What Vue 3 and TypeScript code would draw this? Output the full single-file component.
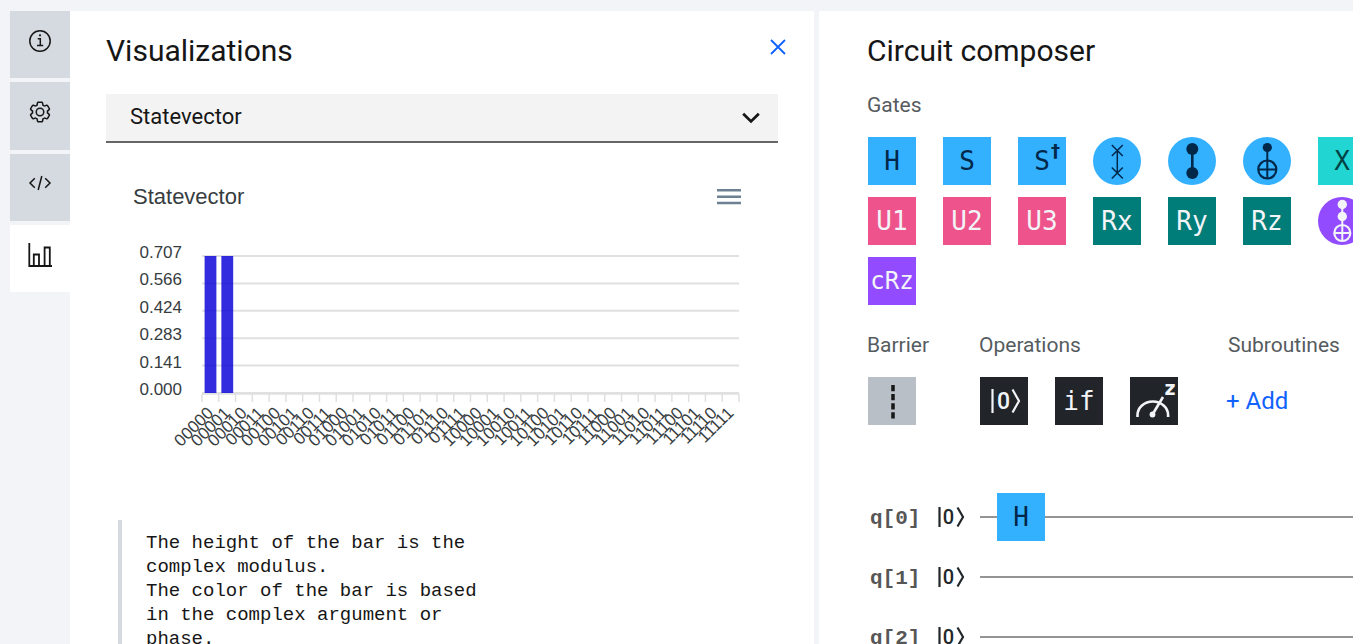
<script setup lang="ts">
import { ref } from 'vue'

type Shape = 'swap' | 'cz' | 'cx' | 'ccx'

interface Gate {
  name: string
  label?: string
  sup?: string
  shape?: Shape
  tone: 'blue' | 'aqua' | 'pink' | 'teal' | 'purple'
}

interface Panel {
  id: string
  title: string
}

const panels: Panel[] = [
  { id: 'info', title: 'Information' },
  { id: 'settings', title: 'Settings' },
  { id: 'code', title: 'Code editor' },
  { id: 'charts', title: 'Visualizations' },
]
const active = ref('charts')
const chartType = ref('Statevector')

const gates: Gate[] = [
  { name: 'H', label: 'H', tone: 'blue' },
  { name: 'S', label: 'S', tone: 'blue' },
  { name: 'S dagger', label: 'S', sup: '†', tone: 'blue' },
  { name: 'Swap', shape: 'swap', tone: 'blue' },
  { name: 'Controlled Z', shape: 'cz', tone: 'blue' },
  { name: 'Controlled X', shape: 'cx', tone: 'blue' },
  { name: 'X', label: 'X', tone: 'aqua' },
  { name: 'U1', label: 'U1', tone: 'pink' },
  { name: 'U2', label: 'U2', tone: 'pink' },
  { name: 'U3', label: 'U3', tone: 'pink' },
  { name: 'Rx', label: 'Rx', tone: 'teal' },
  { name: 'Ry', label: 'Ry', tone: 'teal' },
  { name: 'Rz', label: 'Rz', tone: 'teal' },
  { name: 'Toffoli', shape: 'ccx', tone: 'purple' },
  { name: 'cRz', label: 'cRz', tone: 'purple' },
]

const qubits = [
  { name: 'q[0]', ops: ['H'] },
  { name: 'q[1]', ops: [] as string[] },
  { name: 'q[2]', ops: [] as string[] },
]

const plot = { left: 96, right: 633, top: 26, bottom: 163 }
const yTicks = ['0.707', '0.566', '0.424', '0.283', '0.141', '0.000'].map((text, i) => ({
  text,
  y: plot.top + ((plot.bottom - plot.top) * i) / 5,
}))
const step = (plot.right - plot.left) / 32
const states = Array.from({ length: 32 }, (_, i) => ({
  text: i.toString(2).padStart(5, '0'),
  x: plot.left + step * (i + 0.5),
}))
const ticks = Array.from({ length: 33 }, (_, i) => plot.left + step * i)
const bars = states.slice(0, 2)
</script>

<template>
  <div class="app">
    <nav class="rail" aria-label="Panels">
      <button
        v-for="p in panels"
        :key="p.id"
        type="button"
        class="rail-btn"
        :class="{ active: active === p.id }"
        :aria-label="p.title"
        @click="active = p.id"
      >
        <svg v-if="p.id === 'info'" width="24" height="24" viewBox="0 0 24 24" fill="none" stroke="#161616">
          <circle cx="12" cy="12" r="10.2" stroke-width="1.5" />
          <path d="M9.7 9.7h2.6v6.8M9 16.6h6.2" stroke-width="1.5" />
          <circle cx="12" cy="6.3" r="1.1" fill="#161616" stroke="none" />
        </svg>
        <svg v-else-if="p.id === 'settings'" width="24" height="24" viewBox="0 0 32 32" fill="#161616">
          <path d="M27 16.76v-1.53l1.92-1.68A2 2 0 0 0 29.3 11l-2.36-4a2 2 0 0 0-1.73-1 2 2 0 0 0-.64.1l-2.43.82a11.35 11.35 0 0 0-1.31-.75l-.51-2.52a2 2 0 0 0-2-1.61h-4.68a2 2 0 0 0-2 1.61l-.51 2.52a11.48 11.48 0 0 0-1.32.75L7.43 6.06A2 2 0 0 0 6.79 6a2 2 0 0 0-1.73 1L2.7 11a2 2 0 0 0 .41 2.51L5 15.24v1.53l-1.89 1.68A2 2 0 0 0 2.7 21l2.36 4a2 2 0 0 0 1.73 1 2 2 0 0 0 .64-.1l2.43-.82a11.35 11.35 0 0 0 1.31.75l.51 2.52a2 2 0 0 0 2 1.61h4.72a2 2 0 0 0 2-1.61l.51-2.52a11.48 11.48 0 0 0 1.32-.75l2.42.82a2 2 0 0 0 .64.1 2 2 0 0 0 1.73-1l2.28-4a2 2 0 0 0-.41-2.51ZM25.21 24l-3.43-1.16a8.86 8.86 0 0 1-2.71 1.57L18.36 28h-4.72l-.71-3.55a9.36 9.36 0 0 1-2.7-1.57L6.79 24l-2.36-4 2.72-2.4a8.9 8.9 0 0 1 0-3.13L4.43 12l2.36-4 3.43 1.16a8.86 8.86 0 0 1 2.71-1.57L13.64 4h4.72l.71 3.55a9.36 9.36 0 0 1 2.7 1.57L25.21 8l2.36 4-2.72 2.4a8.9 8.9 0 0 1 0 3.13L27.57 20Z" />
          <path d="M16 22a6 6 0 1 1 6-6 5.94 5.94 0 0 1-6 6Zm0-10a3.91 3.91 0 0 0-4 4 3.91 3.91 0 0 0 4 4 3.91 3.91 0 0 0 4-4 3.91 3.91 0 0 0-4-4Z" />
        </svg>
        <svg v-else-if="p.id === 'code'" width="24" height="24" viewBox="0 0 24 24" fill="none" stroke="#161616" stroke-width="1.5">
          <path d="M6.8 7.2 2 12l4.8 4.8M17.2 7.2 22 12l-4.8 4.8M13.8 5l-3.6 14" />
        </svg>
        <svg v-else width="26" height="26" viewBox="0 0 26 26" fill="none" stroke="#161616" stroke-width="1.8">
          <path d="M2.3 2v23H25M6.8 25V13.5h5.200V25M17.600 25V6.500h5.200V25" />
        </svg>
      </button>
    </nav>

    <section class="panel visual">
      <header class="head">
        <h1>Visualizations</h1>
        <button type="button" class="close" aria-label="Close panel">
          <svg width="16" height="16" viewBox="0 0 16 16" stroke="#0f62fe" stroke-width="1.8">
            <path d="M1 1l14 14M15 1 1 15" />
          </svg>
        </button>
      </header>

      <div class="select-wrap">
        <select v-model="chartType" class="select" aria-label="Visualization">
          <option>Statevector</option>
          <option>Measurement Probabilities</option>
        </select>
        <svg class="chevron" width="18" height="12" viewBox="0 0 18 12" fill="none" stroke="#161616" stroke-width="2.8">
          <path d="M1.2 1.8 9 9.4l7.8-7.600" />
        </svg>
      </div>

      <div class="chart-head">
        <h2>Statevector</h2>
        <button type="button" class="menu" aria-label="Chart menu">
          <svg width="24" height="16" viewBox="0 0 24 16" fill="#6e8192">
            <path d="M0 0h24v2.5H0zM0 6.4h24v2.5H0zM0 12.8h24v2.5H0z" />
          </svg>
        </button>
      </div>

      <svg class="chart" viewBox="0 0 672 250" role="img" aria-label="Statevector amplitudes">
        <g stroke="#e0e0e0" stroke-width="2">
          <line v-for="t in yTicks" :key="t.text" :x1="plot.left" :x2="plot.right" :y1="t.y" :y2="t.y" />
        </g>
        <rect
          v-for="b in bars"
          :key="b.text"
          :x="b.x - 5.8"
          :y="plot.top"
          width="11.8"
          :height="plot.bottom - plot.top"
          fill="#0b04d8"
          fill-opacity="0.84"
        />
        <g stroke="#e0e0e0" stroke-width="1.5">
          <line :x1="plot.left" :x2="plot.right" y1="164" y2="164" />
          <line v-for="x in ticks" :key="x" :x1="x" :x2="x" y1="164" y2="172" />
        </g>
        <g class="axis">
          <text v-for="t in yTicks" :key="t.text" x="76" :y="t.y + 2" text-anchor="end">{{ t.text }}</text>
          <text
            v-for="s in states"
            :key="s.text"
            :x="s.x + 4"
            y="184"
            text-anchor="end"
            :transform="`rotate(-45 ${s.x + 4} 184)`"
          >{{ s.text }}</text>
        </g>
      </svg>

      <blockquote class="note">
        The height of the bar is the<br />complex modulus.<br />The color of the bar is based<br />in the complex argument or<br />phase.
      </blockquote>
    </section>

    <section class="panel composer">
      <h1>Circuit composer</h1>
      <h3>Gates</h3>
      <div class="gates">
        <button
          v-for="g in gates"
          :key="g.name"
          type="button"
          class="tile"
          :class="[g.tone, { round: g.shape, long: g.label && g.label.length > 2 }]"
          :aria-label="g.name"
        >
          <template v-if="g.label">{{ g.label }}<span v-if="g.sup" class="sup">{{ g.sup }}</span></template>
          <svg v-else width="48" height="48" viewBox="0 0 48 48" fill="none" stroke="currentColor" stroke-width="2">
            <g v-if="g.shape === 'swap'" stroke-width="1.5">
              <path d="M18.8 8l11 11M29.8 8l-11 11M18.8 30.5l11 11M29.8 30.5l-11 11M24.3 13.5V36" />
            </g>
            <g v-else-if="g.shape === 'cz'">
              <circle cx="24.3" cy="12" r="6" fill="currentColor" stroke="none" />
              <circle cx="24.3" cy="36" r="6" fill="currentColor" stroke="none" />
              <path d="M24.3 12v24" stroke-width="2.6" />
            </g>
            <g v-else-if="g.shape === 'cx'">
              <circle cx="24.3" cy="10.5" r="4.6" fill="currentColor" stroke="none" />
              <circle cx="24.3" cy="32.5" r="9" stroke-width="2.2" />
              <path d="M24.3 10v32M15 32.5h18.5" />
            </g>
            <g v-else>
              <circle cx="24.3" cy="7.5" r="4.7" fill="currentColor" stroke="none" />
              <circle cx="24.3" cy="19.5" r="4.7" fill="currentColor" stroke="none" />
              <circle cx="24.3" cy="36" r="8" stroke-width="2.2" />
              <path d="M24.3 7v37M16 36h16.5" />
            </g>
          </svg>
        </button>
      </div>

      <div class="groups">
        <div class="group barrier">
          <h3>Barrier</h3>
          <button type="button" class="tile grey" aria-label="Barrier">
            <svg width="48" height="48" viewBox="0 0 48 48" stroke="#161616" stroke-width="3.5">
              <path d="M25 8v34" stroke-dasharray="6.2 2.9" />
            </svg>
          </button>
        </div>
        <div class="group ops">
          <h3>Operations</h3>
          <div class="op-row">
            <button type="button" class="tile dark" aria-label="Reset">
              <svg width="48" height="48" viewBox="0 0 48 48" fill="none" stroke="currentColor" stroke-width="2.2">
                <path d="M12.5 12v24M32.5 12.5l6.5 11.5-6.5 11.5" />
                <text class="ket-zero" x="23.5" y="32" text-anchor="middle">0</text>
              </svg>
            </button>
            <button type="button" class="tile dark">if</button>
            <button type="button" class="tile dark" aria-label="Measure">
              <svg width="48" height="48" viewBox="0 0 48 48" fill="none" stroke="currentColor" stroke-width="2.6">
                <path d="M7.500 40v-2a15.300 13.500 0 0 1 30.600 0v2M22.500 37.500 33 20" />
                <circle cx="22.5" cy="37.5" r="2.9" fill="currentColor" stroke="none" />
                <text class="meter-basis" x="40" y="18" text-anchor="middle">z</text>
              </svg>
            </button>
          </div>
        </div>
        <div class="group subs">
          <h3>Subroutines</h3>
          <button type="button" class="add">+ Add</button>
        </div>
      </div>

      <div class="circuit">
        <div v-for="q in qubits" :key="q.name" class="wire-row">
          <span class="qubit">{{ q.name }}</span>
          <svg class="ket" width="28" height="24" viewBox="0 0 28 24" fill="none" stroke="#21272a" stroke-width="2.2">
            <path d="M2.5 2v20M20.5 2.5l5.500 9.500-5.500 9.500" />
            <text class="ket-small" x="11.500" y="19" text-anchor="middle">0</text>
          </svg>
          <div class="wire">
            <button v-for="op in q.ops" :key="op" type="button" class="tile blue">{{ op }}</button>
          </div>
        </div>
      </div>
    </section>
  </div>
</template>

<style>
body {
  margin: 0;
  background: #f2f4f8;
}
</style>

<style scoped>
.app {
  display: grid;
  grid-template-columns: 60px minmax(0, 744fr) 5px minmax(0, 534fr);
  height: 100vh;
  box-sizing: border-box;
  padding: 11px 0 0 10px;
  overflow: hidden;
  background: #f2f4f8;
  font-family: Roboto, "Open Sans", sans-serif;
  color: #161616;
}

button {
  border: 0;
  padding: 0;
  background: none;
  font: inherit;
  color: inherit;
  cursor: pointer;
}

svg {
  display: block;
}

h1,
h2,
h3 {
  margin: 0;
  font-weight: 400;
}

h1 {
  font-size: 30px;
  line-height: 40px;
}

h3 {
  font-size: 21px;
  line-height: 24px;
  color: #565b60;
}

.rail {
  display: flex;
  flex-direction: column;
  align-self: start;
  gap: 4px;
  height: 281px;
}

.rail-btn {
  display: flex;
  flex: 1;
  justify-content: center;
  align-items: center;
  padding-bottom: 8px;
  background: #d5d9e0;
}

.rail-btn.active {
  background: #fff;
}

.panel {
  background: #fff;
  min-width: 0;
  overflow: hidden;
}

.visual {
  padding: 20px 36px 0;
}

.head {
  display: flex;
  justify-content: space-between;
  align-items: flex-start;
}

.close {
  margin: 8px -8px 0 0;
}

.select-wrap {
  position: relative;
  margin-top: 23px;
}

.select {
  display: block;
  width: 100%;
  height: 49px;
  appearance: none;
  border: 0;
  border-bottom: 2px solid #666;
  border-radius: 0;
  padding: 0 48px 2px 24px;
  background: #f3f3f3;
  font: 22px Roboto, sans-serif;
  color: #161616;
}

.chevron {
  position: absolute;
  right: 18px;
  top: 18px;
  pointer-events: none;
}

.chart-head {
  display: flex;
  justify-content: space-between;
  align-items: center;
  padding: 40px 37px 0 27px;
}

.chart-head h2 {
  font: 22px/28px "Liberation Sans", Arial, sans-serif;
  color: #373d3f;
}

.chart {
  width: 100%;
  height: auto;
  margin-top: 19px;
}

.axis {
  font: 17px "Liberation Sans", Arial, sans-serif;
  fill: #373d3f;
}

.note {
  margin: 40px 0 0 12px;
  padding: 11px 0 40px 24px;
  border-left: 4px solid #d5d9e0;
  font: 19px/24px "Liberation Mono", monospace;
}

.composer {
  grid-column: 4;
  padding: 20px 0 0 48px;
}

.composer > h3 {
  margin-top: 22px;
}

.gates {
  display: grid;
  grid-template-columns: repeat(7, 48px);
  gap: 12px 27px;
  margin: 20px 0 0 1px;
}

.tile {
  position: relative;
  display: flex;
  flex: none;
  justify-content: center;
  align-items: center;
  width: 48px;
  height: 48px;
  font: 26px/48px "DejaVu Sans Mono", monospace;
  white-space: nowrap;
}

.tile.round {
  border-radius: 50%;
}

.tile.long {
  font-size: 24px;
}

.sup {
  position: absolute;
  right: 6px;
  top: 4px;
  font: bold 18px/20px "DejaVu Sans", sans-serif;
}

.blue {
  background: #33b1ff;
  color: #012749;
}

.aqua {
  background: #20d5d2;
  color: #004144;
}

.pink {
  background: #ee538b;
  color: #f2f4f8;
}

.teal {
  background: #007d79;
  color: #f2f4f8;
}

.purple {
  background: #924bff;
  color: #f2f4f8;
}

.grey {
  background: #b9bfc7;
}

.dark {
  background: #21252a;
  color: #f2f4f8;
}

.groups {
  display: flex;
  margin-top: 28px;
}

.group {
  flex: none;
}

.group .tile {
  margin: 20px 0 0 1px;
}

.barrier {
  width: 112px;
}

.ops {
  width: 249px;
}

.op-row {
  display: flex;
  gap: 26px;
}

.add {
  margin: 30px 0 0 -2px;
  font-size: 24px;
  line-height: 28px;
  color: #0f62fe;
}

.ket-zero,
.ket-small {
  font: 500 23px Roboto, sans-serif;
  fill: currentColor;
  stroke: none;
}

.ket-small {
  font-size: 20px;
  fill: #21272a;
}

.meter-basis {
  font: bold 19px "DejaVu Sans", sans-serif;
  fill: currentColor;
  stroke: none;
}

.circuit {
  margin-top: 62px;
}

.wire-row {
  display: flex;
  align-items: center;
  height: 60px;
}

.qubit {
  width: 67px;
  padding: 3px 0 0 3px;
  font: bold 21px/28px "Liberation Mono", monospace;
  color: #565656;
}

.ket {
  flex: none;
}

.wire {
  display: flex;
  flex: 1;
  align-items: center;
  height: 48px;
  margin-left: 15px;
  padding-left: 17px;
  background: linear-gradient(#949494, #949494) center / 100% 2px no-repeat;
}
</style>
